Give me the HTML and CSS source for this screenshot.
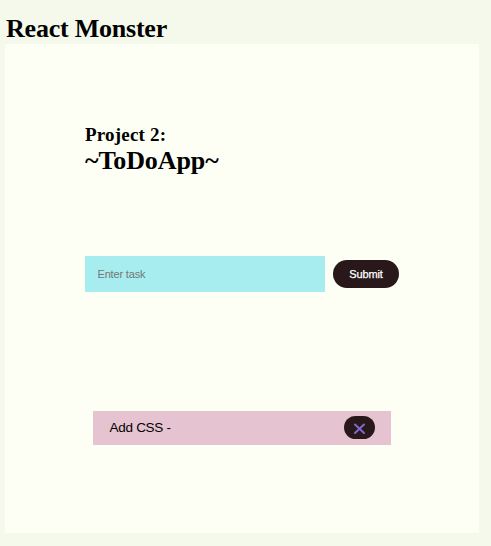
FILE: index.html
```html
<!DOCTYPE html>
<html lang="en">
<head>
<meta charset="utf-8">
<title>React Monster</title>
<link rel="stylesheet" href="styles.css">
</head>
<body>
<h1 class="brand">React Monster</h1>
<main class="panel">
<h2 class="project">Project 2:</h2>
<h1 class="title">~ToDoApp~</h1>
<form class="task-form">
<input class="task-input" type="text" placeholder="Enter task">
<button class="submit" type="button">Submit</button>
</form>
<ul class="tasks">
<li class="task"><span class="task-name">Add CSS -</span>
<button class="remove" type="button" aria-label="Remove"><svg width="13" height="13" viewBox="0 0 13 13"><path d="M2 2.5l9 8.5M11 2.5l-9 8.5" fill="none" stroke="#8068d0" stroke-width="2" stroke-linecap="round"/></svg></button></li>
</ul>
</main>
</body>
</html>
```

FILE: styles.css
```css
* { box-sizing: border-box; }
body { margin: 0; padding: 14px 12px 13px 5px; height: 546px; background: #f5f9eb; font-family: "Liberation Serif", serif; color: #000; overflow: hidden; }
h1, h2, ul { margin: 0; padding: 0; }
.brand { font-size: 26px; line-height: 30px; padding-left: 1px; letter-spacing: -0.22px; }
.panel { height: 489px; padding: 80px; background: #fdfff5; }
.project { font-size: 19px; line-height: 22px; letter-spacing: 0.2px; }
.title { font-size: 26px; line-height: 30px; letter-spacing: -0.1px; }
.task-form { display: flex; align-items: center; gap: 8px; margin-top: 80px; }
.task-input { width: 240px; height: 36px; padding: 0 12.5px; border: 0; border-radius: 0; background: #a7edf0; font: 11px "Liberation Sans", sans-serif; letter-spacing: -0.17px; }
.task-input::placeholder { color: #757575; }
.submit { flex: none; width: 66px; height: 28px; padding: 0; border: 0; border-radius: 14px; background: #28181a; color: #fff; font: 11px "Liberation Sans", sans-serif; letter-spacing: -0.1px; -webkit-text-stroke: 0.25px #fff; }
.tasks { width: 298px; margin: 119px 0 0 8px; list-style: none; }
.task { display: flex; align-items: center; justify-content: space-between; height: 34px; padding: 0 16px 1px; background: #e6c3d0; font: 13.5px "Liberation Sans", sans-serif; }
.task-name { letter-spacing: -0.28px; padding-left: 0.5px; }
.remove { display: grid; place-items: center; width: 31px; height: 23px; padding: 2px 0 0; border: 0; border-radius: 12px; background: #28181a; }
```
